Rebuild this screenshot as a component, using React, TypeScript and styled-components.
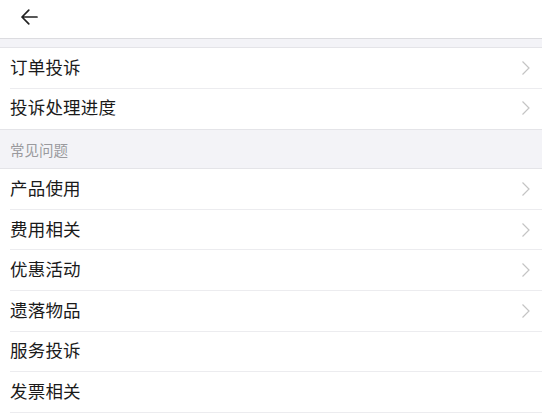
import styled, { createGlobalStyle } from "styled-components";

const GlobalStyle = createGlobalStyle`
  html, body {
    margin: 0;
    padding: 0;
    background: #ffffff;
  }
  body {
    font-family: "Noto Sans CJK SC", "Noto Sans", sans-serif;
  }
`;

type Item = { label: string; arrow?: boolean };

const topItems: Item[] = [
  { label: "订单投诉", arrow: true },
  { label: "投诉处理进度", arrow: true },
];

const faqItems: Item[] = [
  { label: "产品使用", arrow: true },
  { label: "费用相关", arrow: true },
  { label: "优惠活动", arrow: true },
  { label: "遗落物品", arrow: true },
  { label: "服务投诉" },
  { label: "发票相关" },
];

function BackIcon() {
  return (
    <svg width="20" height="20" viewBox="0 0 20 20" fill="none">
      <path
        d="M18 10H3M9.8 3.2L3 10l6.8 6.8"
        stroke="#222"
        strokeWidth="1.7"
        strokeLinecap="round"
        strokeLinejoin="round"
      />
    </svg>
  );
}

function Chevron() {
  return (
    <svg width="10" height="16" viewBox="0 0 10 16" fill="none">
      <path d="M1.5 1.5L8 8l-6.5 6.5" stroke="#c4c4c4" strokeWidth="1.2" />
    </svg>
  );
}

export default function App() {
  return (
    <Page>
      <GlobalStyle />
      <Header>
        <BackButton>
          <BackIcon />
        </BackButton>
      </Header>
      <Gap />
      <List>
        {topItems.map((item, i) => (
          <Row key={item.label} last={i === topItems.length - 1}>
            <Label>{item.label}</Label>
            {item.arrow && <Chevron />}
          </Row>
        ))}
      </List>
      <SectionTitle>常见问题</SectionTitle>
      <List>
        {faqItems.map((item) => (
          <Row key={item.label}>
            <Label>{item.label}</Label>
            {item.arrow && <Chevron />}
          </Row>
        ))}
      </List>
    </Page>
  );
}

const Page = styled.div`
  width: 542px;
  min-height: 413px;
  background: #ffffff;
`;

const Header = styled.header`
  height: 38px;
  display: flex;
  align-items: center;
  padding-left: 19px;
  background: #ffffff;
  border-bottom: 1px solid #dcdce0;
`;

const BackButton = styled.div`
  display: flex;
  align-items: center;
  margin-top: -4px;
`;

const Gap = styled.div`
  height: 8px;
  background: #f3f3f7;
  border-bottom: 1px solid #e4e4e8;
`;

const List = styled.div`
  background: #ffffff;
  padding-left: 10px;
`;

const Row = styled.div<{ last?: boolean }>`
  height: 39.6px;
  display: flex;
  align-items: center;
  justify-content: space-between;
  padding-right: 11px;
  border-bottom: 1px solid ${(p) => (p.last ? "transparent" : "#ececef")};
`;

const Label = styled.span`
  font-size: 17.5px;
  color: #1a1a1a;
  letter-spacing: 0.2px;
  margin-top: -3px;
`;

const SectionTitle = styled.div`
  height: 38px;
  display: flex;
  align-items: center;
  padding-left: 10px;
  background: #f3f3f7;
  border-top: 1px solid #e4e4e8;
  border-bottom: 1px solid #e4e4e8;
  font-size: 14.5px;
  color: #9a9a9e;
`;
